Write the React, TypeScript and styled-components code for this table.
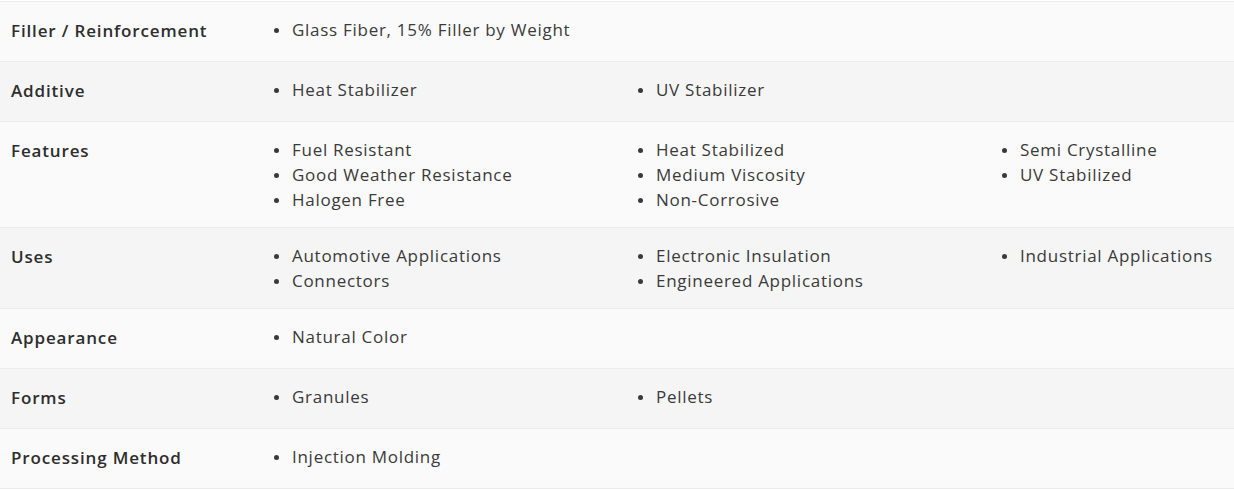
import React from "react";
import styled, { createGlobalStyle } from "styled-components";

const Global = createGlobalStyle`
  html, body { margin: 0; padding: 0; background: #ffffff; overflow: hidden; }
  body { font-family: "Open Sans", "Noto Sans", sans-serif; }
`;

const Table = styled.div`
  margin-top: 1px;
  border-top: 1px solid #ececec;
  width: 1234px;
  overflow: hidden;
`;

const Row = styled.div<{ $alt: boolean }>`
  display: flex;
  background: ${(p) => (p.$alt ? "#f5f5f5" : "#fafafa")};
  border-bottom: 1px solid #ececec;
`;

const Label = styled.div`
  flex: 0 0 258px;
  box-sizing: border-box;
  padding: 16px 11px 18px;
  font-size: 17px;
  line-height: 25px;
  font-weight: 600;
  letter-spacing: 0.85px;
  color: #2e2e2e;
`;

const Values = styled.div`
  display: grid;
  grid-template-columns: repeat(3, 364px);
  padding: 15px 0;
  align-items: start;
`;

const List = styled.ul`
  list-style: none;
  margin: 0;
  padding: 0 0 0 34px;
`;

const Item = styled.li`
  position: relative;
  font-size: 17px;
  line-height: 25px;
  letter-spacing: 0.72px;
  color: #3a3a3a;
  white-space: nowrap;
  &::before {
    content: "";
    position: absolute;
    left: -18px;
    top: 11px;
    width: 5px;
    height: 5px;
    border-radius: 50%;
    background: #3a3a3a;
  }
`;

const rows: { label: string; cols: string[][] }[] = [
  { label: "Filler / Reinforcement", cols: [["Glass Fiber, 15% Filler by Weight"]] },
  { label: "Additive", cols: [["Heat Stabilizer"], ["UV Stabilizer"]] },
  {
    label: "Features",
    cols: [
      ["Fuel Resistant", "Good Weather Resistance", "Halogen Free"],
      ["Heat Stabilized", "Medium Viscosity", "Non-Corrosive"],
      ["Semi Crystalline", "UV Stabilized"],
    ],
  },
  {
    label: "Uses",
    cols: [
      ["Automotive Applications", "Connectors"],
      ["Electronic Insulation", "Engineered Applications"],
      ["Industrial Applications"],
    ],
  },
  { label: "Appearance", cols: [["Natural Color"]] },
  { label: "Forms", cols: [["Granules"], ["Pellets"]] },
  { label: "Processing Method", cols: [["Injection Molding"]] },
];

export default function App() {
  return (
    <>
      <Global />
      <Table>
        {rows.map((r, i) => (
          <Row key={r.label} $alt={i % 2 === 1}>
            <Label>{r.label}</Label>
            <Values>
              {r.cols.map((c, j) => (
                <List key={j}>
                  {c.map((t) => (
                    <Item key={t}>{t}</Item>
                  ))}
                </List>
              ))}
            </Values>
          </Row>
        ))}
      </Table>
    </>
  );
}
